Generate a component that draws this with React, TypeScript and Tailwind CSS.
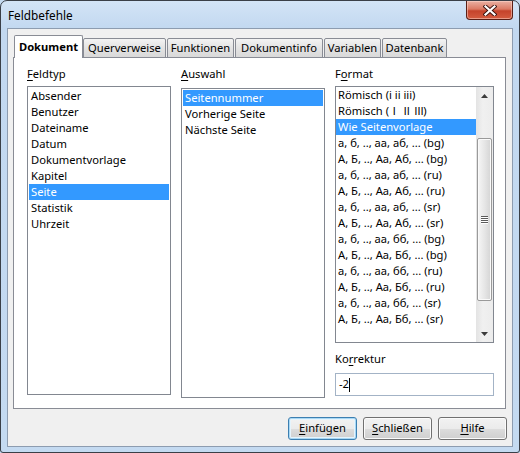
import React from "react";

function U({ children }: { children: React.ReactNode }) {
  return <span className="underline decoration-1 underline-offset-[2px]">{children}</span>;
}

function Row({ text, sel }: { text: React.ReactNode; sel?: boolean }) {
  return (
    <div
      className={`h-4 leading-4 pl-[2px] whitespace-nowrap ${
        sel ? "bg-[#3399ff] text-white" : "text-black"
      }`}
    >
      {text}
    </div>
  );
}

function RN({ children }: { children: React.ReactNode }) {
  return <span className="[font-family:'Noto_Sans_CJK_JP',sans-serif] text-[10.5px] tracking-[-1px]">{children}</span>;
}

const feldtyp = [
  "Absender",
  "Benutzer",
  "Dateiname",
  "Datum",
  "Dokumentvorlage",
  "Kapitel",
  "Seite",
  "Statistik",
  "Uhrzeit",
];
const auswahl = ["Seitennummer", "Vorherige Seite", "Nächste Seite"];
const formats: { key: string; node: React.ReactNode }[] = [
  { key: "r1", node: "Römisch (i ii iii)" },
  {
    key: "r2",
    node: (
      <>
        Römisch (<RN>Ⅰ</RN> <RN>Ⅱ</RN> <RN>Ⅲ</RN>)
      </>
    ),
  },
  { key: "sel", node: "Wie Seitenvorlage" },
  { key: "a", node: "а, б, .., аа, аб, ... (bg)" },
  { key: "b", node: "А, Б, .., Аа, Аб, ... (bg)" },
  { key: "c", node: "а, б, .., аа, аб, ... (ru)" },
  { key: "d", node: "А, Б, .., Аа, Аб, ... (ru)" },
  { key: "e", node: "а, б, .., аа, аб, ... (sr)" },
  { key: "f", node: "А, Б, .., Аа, Аб, ... (sr)" },
  { key: "g", node: "а, б, .., аа, бб, ... (bg)" },
  { key: "h", node: "А, Б, .., Аа, Бб, ... (bg)" },
  { key: "i", node: "а, б, .., аа, бб, ... (ru)" },
  { key: "j", node: "А, Б, .., Аа, Бб, ... (ru)" },
  { key: "k", node: "а, б, .., аа, бб, ... (sr)" },
  { key: "l", node: "А, Б, .., Аа, Бб, ... (sr)" },
];

const tabs: { label: string; w: string; ml: string }[] = [
  { label: "Querverweise", w: "w-[83px]", ml: "ml-0" },
  { label: "Funktionen", w: "w-[67px]", ml: "ml-[1px]" },
  { label: "Dokumentinfo", w: "w-[88px]", ml: "ml-[1px]" },
  { label: "Variablen", w: "w-[57px]", ml: "ml-[1px]" },
  { label: "Datenbank", w: "w-[65px]", ml: "ml-[1px]" },
];

function Button({ children, def }: { children: React.ReactNode; def?: boolean }) {
  return (
    <div
      className={`w-[69px] h-[23px] rounded-[3px] border flex items-center justify-center text-black bg-[linear-gradient(to_bottom,#f2f2f2_0%,#ebebeb_50%,#dddddd_50%,#cfcfcf_100%)] ${
        def
          ? "border-[#3c7fb1] shadow-[inset_0_0_0_1px_#a8d8f5,inset_0_0_0_2px_#e6f4fc]"
          : "border-[#707070] shadow-[inset_0_0_0_1px_#fbfbfb]"
      }`}
    >
      {children}
    </div>
  );
}

function Arrow({ up }: { up?: boolean }) {
  return (
    <svg width="7" height="4" viewBox="0 0 7 4">
      {up ? (
        <path d="M0 4 L3.5 0 L7 4 Z" fill="#3b3b3b" />
      ) : (
        <path d="M0 0 L3.5 4 L7 0 Z" fill="#3b3b3b" />
      )}
    </svg>
  );
}

export default function App() {
  return (
    <div className="w-[520px] h-[453px] [font-family:'Noto_Sans',sans-serif] text-[11.2px] bg-[#c4daf1]">
      <div className="w-[520px] h-[453px] border border-[#3a3f47] rounded-t-[7px] rounded-b-[3px] bg-[linear-gradient(to_bottom,#d3e4f6_0px,#c2d8f0_28px,#c4daf1_100%)] flex flex-col overflow-hidden">
        {/* title bar */}
        <div className="h-[27px] flex items-start justify-between shrink-0">
          <div className="pl-[7px] pt-[6px] leading-4 text-[11.8px] text-black">Feldbefehle</div>
          <div className="mr-[6px] w-[47px] h-[19px] rounded-b-[4px] border border-t-0 border-[#5a1f16] bg-[linear-gradient(to_bottom,#eab1a3_0%,#db7a64_45%,#c5432b_55%,#d45c40_100%)] shadow-[inset_0_0_0_1px_rgba(255,220,210,0.5)] flex items-center justify-center">
            <svg width="14" height="11" viewBox="0 0 14 11">
              <path d="M2.5 1.5 L11.5 9.5 M11.5 1.5 L2.5 9.5" stroke="#3b1410" strokeWidth="4" strokeLinecap="square" />
              <path d="M2.5 1.5 L11.5 9.5 M11.5 1.5 L2.5 9.5" stroke="#ffffff" strokeWidth="2.2" strokeLinecap="square" />
            </svg>
          </div>
        </div>
        {/* client */}
        <div className="mx-[6px] w-[506px] h-[419px] border border-[#8d9cb0] bg-[#f0f0f0] flex flex-col shrink-0">
          <div className="pt-[6px] ml-[5px] flex flex-col">
            {/* tabs */}
            <div className="flex items-end h-[23px] ml-[1px] relative z-10">
              <div className="w-[69px] h-[23px] bg-white border border-b-0 border-[#898c95] rounded-t-[2px] flex items-center justify-center font-bold text-black">
                Dokument
              </div>
              {tabs.map((t) => (
                <div
                  key={t.label}
                  className={`${t.w} ${t.ml} h-[20px] border border-[#898c95] rounded-t-[2px] bg-[linear-gradient(to_bottom,#f3f3f3,#e3e3e3_50%,#d9d9d9)] flex items-center justify-center text-black`}
                >
                  {t.label}
                </div>
              ))}
            </div>
            {/* page */}
            <div className="-mt-px w-[493px] h-[352px] border border-[#898c95] bg-white pt-[8px] pl-[13px]">
              <div className="grid grid-cols-[144px_144px_159px] gap-x-[10px] text-black">
                <div className="flex flex-col">
                  <div className="h-4 leading-4">
                    <U>F</U>eldtyp
                  </div>
                  <div className="mt-[4px] h-[309px] border border-[#828790] bg-white p-px">
                    {feldtyp.map((t) => (
                      <Row key={t} text={t} sel={t === "Seite"} />
                    ))}
                  </div>
                </div>
                <div className="flex flex-col">
                  <div className="h-4 leading-4">
                    <U>A</U>uswahl
                  </div>
                  <div className="mt-[6px] h-[310px] border border-[#828790] bg-white p-px">
                    {auswahl.map((t) => (
                      <Row key={t} text={t} sel={t === "Seitennummer"} />
                    ))}
                  </div>
                </div>
                <div className="flex flex-col">
                  <div className="h-4 leading-4">
                    F<U>o</U>rmat
                  </div>
                  <div className="mt-[4px] h-[257px] border border-[#828790] bg-white flex">
                    <div className="flex-1 overflow-hidden">
                      {formats.map((t) => (
                        <Row key={t.key} text={t.node} sel={t.key === "sel"} />
                      ))}
                    </div>
                    <div className="w-[17px] flex flex-col bg-[linear-gradient(to_right,#e3e3e3,#f0f0f0_40%,#ececec)]">
                      <div className="h-[17px] flex items-center justify-center">
                        <Arrow up />
                      </div>
                      <div className="flex-1 pt-[34px] px-[1px]">
                        <div className="h-[163px] rounded-[2px] border border-[#9a9a9a] bg-[linear-gradient(to_right,#f6f6f6,#e6e6e6_50%,#d4d4d4)] shadow-[inset_0_0_0_1px_#fafafa] flex items-center justify-center">
                          <svg width="7" height="8" viewBox="0 0 7 8">
                            <path d="M0 0.5 H7 M0 2.5 H7 M0 4.5 H7 M0 6.5 H7" stroke="#5a5a5a" strokeWidth="1" />
                            <path d="M0 1.5 H7 M0 3.5 H7 M0 5.5 H7 M0 7.5 H7" stroke="#ffffff" strokeWidth="1" />
                          </svg>
                        </div>
                      </div>
                      <div className="h-[17px] flex items-center justify-center">
                        <Arrow />
                      </div>
                    </div>
                  </div>
                  <div className="mt-[8px] h-4 leading-4">
                    Ko<U>r</U>rektur
                  </div>
                  <div className="mt-[6px] h-[23px] border border-[#a3b3c6] bg-white flex items-center pl-[3px]">
                    <span>-2</span>
                    <span className="inline-block w-px h-[14px] bg-black" />
                  </div>
                </div>
              </div>
            </div>
          </div>
          {/* buttons */}
          <div className="mt-[8px] mr-[5px] flex justify-end gap-[6px]">
            <Button def>
              <span>
                <U>E</U>infügen
              </span>
            </Button>
            <Button>
              <span>
                <U>S</U>chließen
              </span>
            </Button>
            <Button>
              <span>
                <U>H</U>ilfe
              </span>
            </Button>
          </div>
        </div>
      </div>
    </div>
  );
}
